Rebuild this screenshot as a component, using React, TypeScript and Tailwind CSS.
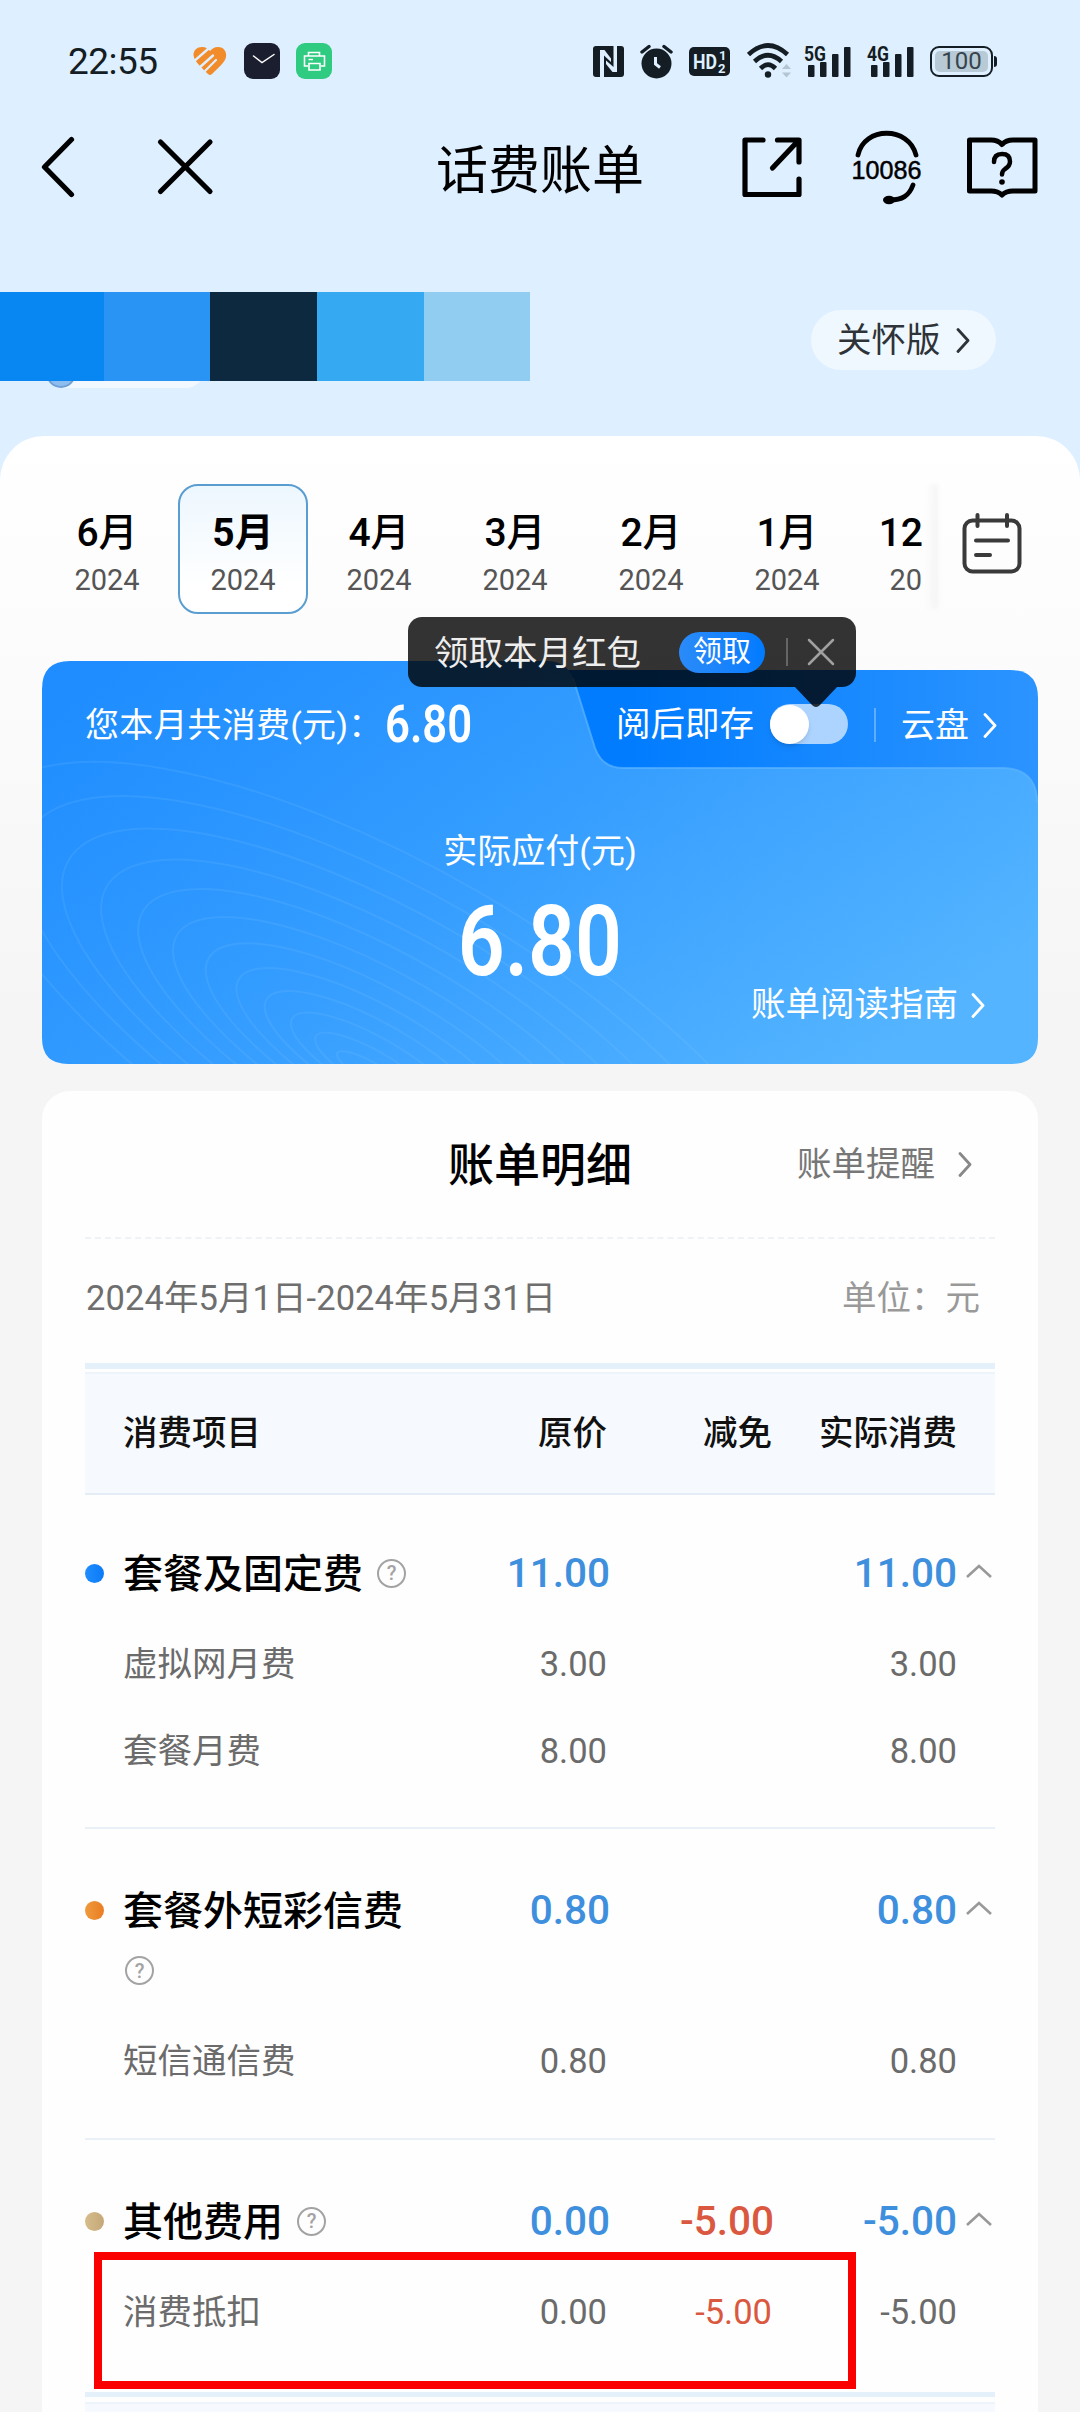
import React from "react";

const MONTHS = [
  { m: "6月", y: "2024" },
  { m: "5月", y: "2024", active: true },
  { m: "4月", y: "2024" },
  { m: "3月", y: "2024" },
  { m: "2月", y: "2024" },
  { m: "1月", y: "2024" },
];

type Line = { name: string; price: string; off?: string; paid: string };
type Group = Line & { dot: string; box: string; wrapHelp?: boolean; items: Line[] };

const GROUPS: Group[] = [
  {
    name: "套餐及固定费", price: "11.00", paid: "11.00",
    dot: "bg-linear-to-r from-[#1f8dff] to-[#0a7bf6]",
    box: "h-[334px] pt-[38px] border-b-2",
    items: [
      { name: "虚拟网月费", price: "3.00", paid: "3.00" },
      { name: "套餐月费", price: "8.00", paid: "8.00" },
    ],
  },
  {
    name: "套餐外短彩信费", price: "0.80", paid: "0.80", wrapHelp: true,
    dot: "bg-linear-to-r from-[#ee9b3c] to-[#ea7c22]",
    box: "h-[311px] pt-[41px] border-b-2",
    items: [{ name: "短信通信费", price: "0.80", paid: "0.80" }],
  },
  {
    name: "其他费用", price: "0.00", off: "-5.00", paid: "-5.00",
    dot: "bg-linear-to-r from-[#d6bd8b] to-[#c5a778]",
    box: "h-[252px] pt-[41px]",
    items: [{ name: "消费抵扣", price: "0.00", off: "-5.00", paid: "-5.00" }],
  },
];

const COLS = "grid grid-cols-[38px_298px_189px_164px_183px_39px]";

function Chevron({ w = 14, h = 25, className = "" }: { w?: number; h?: number; className?: string }) {
  return (
    <svg width={w} height={h} viewBox="0 0 14 25" fill="none" preserveAspectRatio="none" className={className}>
      <path d="M2 1.5 L12 12.5 L2 23.5" stroke="currentColor" strokeWidth="2.8" strokeLinecap="round" strokeLinejoin="round" />
    </svg>
  );
}

function Help() {
  return (
    <span className="flex h-[29px] w-[29px] items-center justify-center rounded-full border-2 border-[#a3a3a3] text-[20px] leading-none text-[#a3a3a3]">
      ?
    </span>
  );
}

function Signal({ label }: { label: string }) {
  return (
    <svg className="overflow-visible" width="48" height="34" viewBox="0 0 48 34" fill="#141d23">
      <text x="0" y="16.500" fontSize="21" fontWeight="700" fontFamily="Roboto, sans-serif" textLength="22" lengthAdjust="spacingAndGlyphs">{label}</text>
      <rect x="4" y="21" width="6.5" height="12" rx="1" />
      <rect x="16" y="18" width="6.5" height="15" rx="1" />
      <rect x="28" y="10" width="6.5" height="23" rx="1" />
      <rect x="40" y="3" width="6.5" height="30" rx="1" />
    </svg>
  );
}

function StatusBar() {
  return (
    <div className="flex h-[122px] items-center pl-[68px] pr-[83px] text-[#141d23]">
      <span className="w-[125px] pt-[1px] text-[37px] leading-[40px] tracking-[-0.5px]">22:55</span>
      <svg width="34" height="30" viewBox="0 0 34 30" fill="none" strokeLinecap="round" strokeLinejoin="round">
        <path d="M9 1 C13 1 15 3 17 5 C19 3 21 1 25 1 C31 1 34 6 33 11 C32 16 27 20 19 28 Q17 30 15 28 C7 20 1 15 0.500 9 C0.500 4 4 1 9 1Z" fill="#f28c2a" />
        <path d="M0 16 L15 3" stroke="#deefff" strokeWidth="2.400" />
        <path d="M6 22 L20 9.500" stroke="#deefff" strokeWidth="2.400" />
        <path d="M12 25 L23 14" stroke="#deefff" strokeWidth="2.200" />
      </svg>
      <svg className="ml-[17px]" width="36" height="36" viewBox="0 0 36 36">
        <rect width="36" height="36" rx="9" fill="#1b1e2e" />
        <path d="M9.500 13 L18 19.500 L30 11.500" fill="none" stroke="#fff" strokeWidth="1.500" strokeLinecap="round" />
      </svg>
      <svg className="ml-[16px]" width="36" height="36" viewBox="0 0 36 36">
        <rect width="36" height="36" rx="9" fill="#2ecb80" />
        <g fill="none" stroke="#fff" strokeWidth="1.600">
          <path d="M12.500 13 V9.500 H23.500 V13" />
          <path d="M12 23 H8.500 V13 H28.500 V23 H25" />
          <path d="M13 20.500 H24 V27 H13Z M12.500 16.500 H17" />
        </g>
      </svg>
      <div className="ml-auto flex items-center">
        <svg width="31" height="31" viewBox="0 0 31 31">
          <rect width="31" height="31" rx="3" fill="#141d23" />
          <path d="M7 31 V4 H11.500 L18 12.500 V16 L11 9.500 V31Z" fill="#deefff" />
          <path d="M24 0 V26 H19.500 L13 18 V14.500 L20.500 21 V0Z" fill="#deefff" />
        </svg>
        <svg className="ml-[16px]" width="33" height="35" viewBox="0 0 33 35" fill="none">
          <circle cx="16.500" cy="19.500" r="15" fill="#141d23" />
          <path d="M2 8 L9 2.500 M31 8 L24 2.500" stroke="#141d23" strokeWidth="3.400" strokeLinecap="round" />
          <path d="M15.500 13 V20 L20 23.500" stroke="#deefff" strokeWidth="3" />
        </svg>
        <svg className="ml-[16px]" width="41" height="29" viewBox="0 0 41 29">
          <rect width="41" height="29" rx="5" fill="#141d23" />
          <g fill="#deefff" fontFamily="Roboto, sans-serif" fontWeight="700">
            <text x="4" y="22" fontSize="21" textLength="24" lengthAdjust="spacingAndGlyphs">HD</text>
            <text x="30" y="13" fontSize="13">1</text>
            <text x="29" y="26" fontSize="13">2</text>
          </g>
        </svg>
        <svg className="ml-[17px]" width="44" height="36" viewBox="0 0 44 36" fill="none" stroke="#141d23" strokeWidth="4.600">
          <path d="M1.500 11.500 Q21 -6.500 40.500 11.500" />
          <path d="M7.500 18.500 Q21 6 34.500 18.500" />
          <path d="M13.500 25.500 Q21 18 28.500 25.500" />
          <circle cx="21" cy="31.500" r="3.200" fill="#141d23" stroke="none" />
          <path d="M35 26 L39.500 21 L44 26Z M35 29.500 L39.500 34.500 L44 29.500Z" fill="#b3c5d3" stroke="none" />
        </svg>
        <div className="ml-[13px] flex gap-[15px]">
          <Signal label="5G" />
          <Signal label="4G" />
        </div>
        <div className="ml-[15px] flex h-[31px] w-[63px] rounded-[9px] border-2 border-[#141d23] p-[3px]">
          <div className="flex flex-1 items-center justify-center rounded-[5px] bg-[#b7cad6] text-[24px] leading-none text-[#37444d]">100</div>
        </div>
        <span className="ml-[1px] h-[11px] w-[3px] rounded-r bg-[#141d23]" />
      </div>
    </div>
  );
}

function NavBar() {
  return (
    <div className="grid h-[90px] grid-cols-[1fr_auto_1fr] items-center pl-[42px] pr-[42px] text-black">
      <div className="-ml-[2px] flex items-center">
        <svg width="36" height="62" viewBox="0 0 36 62" fill="none" stroke="currentColor" strokeWidth="5.200" strokeLinecap="round" strokeLinejoin="round">
          <path d="M31.500 3.500 L4.500 31 L31.500 58.500" />
        </svg>
        <svg className="ml-[80px]" width="60" height="60" viewBox="0 0 60 60" fill="none" stroke="currentColor" strokeWidth="5.200" strokeLinecap="round">
          <path d="M4.500 5 L54 54.500 M54 5 L4.500 54.500" />
        </svg>
      </div>
      <h1 className="pt-[9px] text-[52px] leading-[56px]">话费账单</h1>
      <div className="flex items-center justify-end">
        <svg width="62" height="62" viewBox="0 0 62 62" fill="none" stroke="currentColor" strokeWidth="5.200" strokeLinecap="round" strokeLinejoin="round">
          <path d="M22 4 H4 V58.500 H58 V43" />
          <path d="M36.500 4 H58 V26 M57 5 L31.500 32" />
        </svg>
        <svg className="ml-[47px] overflow-visible" width="74" height="74" viewBox="0 0 74 74" fill="none" stroke="currentColor" strokeWidth="4.800" strokeLinecap="round">
          <path d="M8 25 C14 -4 59 -4 66 25" />
          <path d="M63 55 C59 66 52 70 40 70" />
          <ellipse cx="39" cy="70" rx="6" ry="4.200" fill="currentColor" stroke="none" />
          <text x="1.500" y="48.500" fontSize="26" fontFamily="'Liberation Sans', sans-serif" textLength="70" lengthAdjust="spacingAndGlyphs" fill="currentColor" stroke="currentColor" strokeWidth="0.500">10086</text>
        </svg>
        <svg className="ml-[42px]" width="72" height="64" viewBox="0 0 72 64" fill="none" stroke="currentColor" strokeWidth="5" strokeLinejoin="round" strokeLinecap="round">
          <path d="M3.500 5 H25 Q32 5 36 9.500 Q40 5 47 5 H69 V56 H47 Q40 56 36 60 Q32 56 25 56 H3.500Z" />
          <path d="M28 27 Q28 19 36 19 Q44 19 44 26.500 Q44 31 39 34 Q36 36 36 39.500" strokeWidth="4.500" />
          <circle cx="36" cy="47" r="2.800" fill="currentColor" stroke="none" />
        </svg>
      </div>
    </div>
  );
}

function UserStrip() {
  return (
    <div className="flex h-[224px] items-start justify-between pt-[80px]">
      <div className="relative">
        <div className="absolute left-[46px] top-[60px] flex h-[36px] w-[158px] rounded-full bg-[#f1f8ff]">
          <span className="h-[36px] w-[30px] rounded-full border-2 border-[#6f9fd8] bg-[#8fbdee]" />
        </div>
        <div className="relative flex h-[89px]">
          <span className="w-[104px] bg-[#0887f2]" />
          <span className="w-[106px] bg-[#2994f3]" />
          <span className="w-[107px] bg-[#0c2940]" />
          <span className="w-[107px] bg-[#35a9f1]" />
          <span className="w-[106px] bg-[#90cdf1]" />
        </div>
      </div>
      <div className="mr-[84px] mt-[18px] flex h-[60px] w-[185px] items-center rounded-full bg-[#f0f8ff] pl-[26px] text-[34.500px] text-[#2e3338]">
        <span className="pt-[2px]">关怀版</span>
        <Chevron className="ml-[15px]" />
      </div>
    </div>
  );
}

function MonthTabs() {
  return (
    <div className="flex h-[225px] pl-[39px] pt-[48px]">
      <div className="flex w-[885px]">
        {MONTHS.map((t) => (
          <div key={t.m} className="flex w-[136px] shrink-0 justify-center">
            <div
              className={
                t.active
                  ? "flex h-[130px] w-[130px] flex-col items-center rounded-[20px] border-2 border-[#5a9dd0] bg-linear-to-b from-[#edf7fe] to-white to-80% pt-[24px]"
                  : "flex h-[130px] w-[130px] flex-col items-center border-2 border-transparent pt-[24px]"
              }
            >
              <span className={t.active ? "text-[39px] leading-[46px] font-bold text-black" : "text-[39px] leading-[46px] font-medium text-black"}>{t.m}</span>
              <span className="text-[29px] leading-[48px] text-[#555]">{t.y}</span>
            </div>
          </div>
        ))}
        {/* leading half of the December tab, which scrolls under the calendar button */}
        <div className="flex h-[130px] w-[69px] flex-col items-end pt-[26px] pr-px">
          <span className="text-[39px] leading-[46px] font-medium text-black">12</span>
          <span className="pr-px text-[29px] leading-[48px] text-[#555]">20</span>
        </div>
      </div>
      <div className="ml-[2px] h-[125px] w-[12px] bg-linear-to-l from-[#e9e9e9] to-transparent opacity-50 blur-[2px]" />
      <svg className="ml-[24px] mt-[29px]" width="60" height="62" viewBox="0 0 60 62" fill="none" stroke="#3a3a3a" strokeWidth="4" strokeLinecap="round">
        <rect x="2.500" y="7.500" width="55" height="51" rx="8" />
        <path d="M15.500 2 V13 M45 2 V13 M14 27.500 H46 M14 42 H28" />
      </svg>
    </div>
  );
}

const RINGS = Array.from({ length: 12 }, (_, i) => ({
  cx: 330 + i * 2,
  cy: 412 - i * 3,
  rx: 40 + i * i * 1.2 + i * 26,
  ry: 10 + i * i * 0.6 + i * 8,
}));

function CardArt() {
  return (
    <svg className="absolute inset-0" width="996" height="403" viewBox="0 0 996 403" fill="none">
      <defs>
        <linearGradient id="tab" x1="0.200" y1="0.300" x2="1" y2="0.300">
          <stop offset="0" stopColor="#017cff" />
          <stop offset="1" stopColor="#2c94ff" />
        </linearGradient>
        <linearGradient id="folder" x1="0" y1="0.150" x2="1" y2="0.700">
          <stop offset="0" stopColor="#1f8dff" />
          <stop offset="0.500" stopColor="#369eff" />
          <stop offset="1" stopColor="#54b4ff" />
        </linearGradient>
        <clipPath id="folderClip">
          <path d="M0 28 Q0 0 28 0 H505 Q524 0 531 17 L553 87 Q560 107 581 107 H962 Q995 108 996 142 V377 Q996 403 970 403 H26 Q0 403 0 377Z" />
        </clipPath>
      </defs>
      <path d="M480 9 H968 Q996 9 996 37 V200 H480Z" fill="url(#tab)" />
      <g clipPath="url(#folderClip)">
        <rect width="996" height="403" fill="url(#folder)" />
        <g stroke="#8fd0ff" strokeOpacity="0.130" strokeWidth="2">
          {RINGS.map((r, i) => (
            <ellipse key={i} cx={r.cx} cy={r.cy} rx={r.rx} ry={r.ry} transform={`rotate(30 ${r.cx} ${r.cy})`} />
          ))}
        </g>
      </g>
      <path d="M531 17 L553 87 Q560 107 581 107 H962 Q995 108 995 142" stroke="#5db4ff" strokeWidth="2" strokeOpacity="0.700" />
    </svg>
  );
}

function Tooltip() {
  return (
    <div className="absolute left-[366px] top-[-44px] flex h-[70px] w-[448px] items-center rounded-[14px] bg-black/80 pl-[26px] text-[34.500px] text-[#eee]">
      <span className="pt-[3px]">领取本月红包</span>
      <span className="ml-[38px] flex h-[41px] w-[86px] items-center justify-center rounded-full bg-linear-to-r from-[#2a8bf8] to-[#007bff] pt-px text-[29px] leading-none text-white">领取</span>
      <span className="ml-[21px] h-[28px] w-[2px] bg-[#666]" />
      <svg className="ml-[19px]" width="28" height="28" viewBox="0 0 28 28" stroke="#a0a0a0" strokeWidth="2.500" strokeLinecap="round">
        <path d="M2 2 L26 26 M26 2 L2 26" />
      </svg>
      <svg className="absolute left-[387px] top-[70px]" width="42" height="21" viewBox="0 0 42 21">
        <path d="M0 0 H42 L25 18 Q21 22 17 18Z" fill="#000" fillOpacity="0.800" />
      </svg>
    </div>
  );
}

function SummaryCard() {
  return (
    <div className="relative mx-[42px] h-[403px] w-[996px] text-white">
      <CardArt />
      <div className="relative flex h-[128px] items-center pl-[43px]">
        <span className="text-[34px] tracking-[0.200px]">您本月共消费(元)：</span>
        <span className="ml-[3px] inline-block w-[90px] origin-left scale-x-[0.840] text-[52px] leading-none font-semibold">6.80</span>
        <span className="ml-auto text-[34.500px]">阅后即存</span>
        <span className="ml-[16px] flex h-[40px] w-[78px] -translate-y-px items-center rounded-full bg-[#acd4ff]">
          <span className="h-[39px] w-[39px] rounded-full bg-white shadow-md" />
        </span>
        <span className="ml-[26px] h-[34px] w-[2px] bg-white/30" />
        <span className="ml-[25px] text-[34px]">云盘</span>
        <Chevron className="ml-[14px] mr-[41px]" w={14} h={25} />
      </div>
      <div className="relative flex flex-col items-center pt-[38px]">
        <span className="text-[34px] leading-[48px]">实际应付(元)</span>
        <span className="mt-[16px] inline-block scale-x-[0.830] text-[99px] leading-[100px] font-semibold">6.80</span>
      </div>
      <div className="relative mr-[53px] -mt-[10px] flex h-[48px] items-center justify-end text-[34.500px]">
        账单阅读指南
        <Chevron className="ml-[13px]" w={14} h={25} />
      </div>
      <Tooltip />
    </div>
  );
}

function GroupBlock({ g }: { g: Group }) {
  return (
    <section className={`border-[#e9f0f7] ${g.box}`}>
      <div className={`${COLS} text-right text-[40.500px] leading-[80px] font-medium text-[#3e8fdd]`}>
        <span className={`mt-[31px] h-[19px] w-[19px] rounded-full ${g.dot}`} />
        <div className="flex flex-wrap items-center text-left text-[40px] text-black">
          <span className="h-[80px] leading-[83px]">{g.name}</span>
          {g.wrapHelp ? (
            <span className="flex h-[60px] w-full items-start pt-[6px] pl-[2px]"><Help /></span>
          ) : (
            <span className="ml-[14px]"><Help /></span>
          )}
        </div>
        <span>{g.price}</span>
        <span className="text-[#d9583f]">{g.off}</span>
        <span>{g.paid}</span>
        <svg className="ml-[8px] mt-[30px]" width="28" height="16" viewBox="0 0 28 16" fill="none" stroke="#999" strokeWidth="2.600">
          <path d="M2 14 L14 3 L26 14" />
        </svg>
      </div>
      <div className="mt-[8px]">
        {g.items.map((it) => (
          <div key={it.name} className={`${COLS} text-right text-[34.500px] leading-[87px] text-[#6b6b6b]`}>
            <span />
            <span className="text-left">{it.name}</span>
            <span className="pr-[3px]">{it.price}</span>
            <span className="pr-[2px] text-[#d9583f]">{it.off}</span>
            <span>{it.paid}</span>
          </div>
        ))}
      </div>
    </section>
  );
}

function DetailCard() {
  return (
    <div className="relative mx-[42px] mt-[27px] h-[1321px] overflow-hidden rounded-t-[28px] bg-[#fefefe] px-[43px]">
      <div className="grid h-[148px] grid-cols-[1fr_auto_1fr] items-center border-b-2 border-dashed border-[#f0f3f5]">
        <span />
        <h2 className="pt-[2px] text-[46px] font-medium text-black">账单明细</h2>
        <div className="flex items-center justify-end pr-[23px] text-[34.500px] text-[#777]">
          <span className="pt-[2px]">账单提醒</span>
          <Chevron className="ml-[23px] text-[#888]" />
        </div>
      </div>
      <div className="flex h-[124px] items-center justify-between pr-[15px] pb-[4px] text-[34.500px] text-[#6e6e6e]">
        <span className="pl-px tracking-[0.080px]">2024年5月1日-2024年5月31日</span>
        <span className="text-[#999]">单位：元</span>
      </div>
      <div className="h-[6px] bg-[#e5f1fa]" />
      <div className={`${COLS} mt-[3px] h-[123px] items-center border-y-2 border-t-[#edf4fa] border-b-[#e4ecf5] bg-[#f6fafe] text-right text-[34.500px] font-medium text-[#111]`}>
        <span />
        <span className="text-left">消费项目</span>
        <span className="pr-[3px]">原价</span>
        <span className="pr-[2px]">减免</span>
        <span>实际消费</span>
      </div>
      {GROUPS.map((g) => (
        <GroupBlock key={g.name} g={g} />
      ))}
      <div className="h-[5px] bg-[#e5f1fa]" />
      <div className="mt-[5px] h-[20px] border-t-2 border-[#edf4fa] bg-[#f6fafe]" />
      <div className="absolute left-[52px] top-[1161px] h-[137px] w-[762px] border-8 border-[#fb0000]" />
    </div>
  );
}

export default function App() {
  return (
    <div className="h-[2412px] w-[1080px] overflow-hidden bg-[#deefff] font-['Roboto','Noto_Sans_CJK_SC',sans-serif]">
      <StatusBar />
      <NavBar />
      <UserStrip />
      <main className="h-[1976px] rounded-t-[44px] bg-linear-to-b from-white via-[#fcfcfc] via-10% to-[#f5f5f5] to-30%">
        <MonthTabs />
        <SummaryCard />
        <DetailCard />
      </main>
    </div>
  );
}
